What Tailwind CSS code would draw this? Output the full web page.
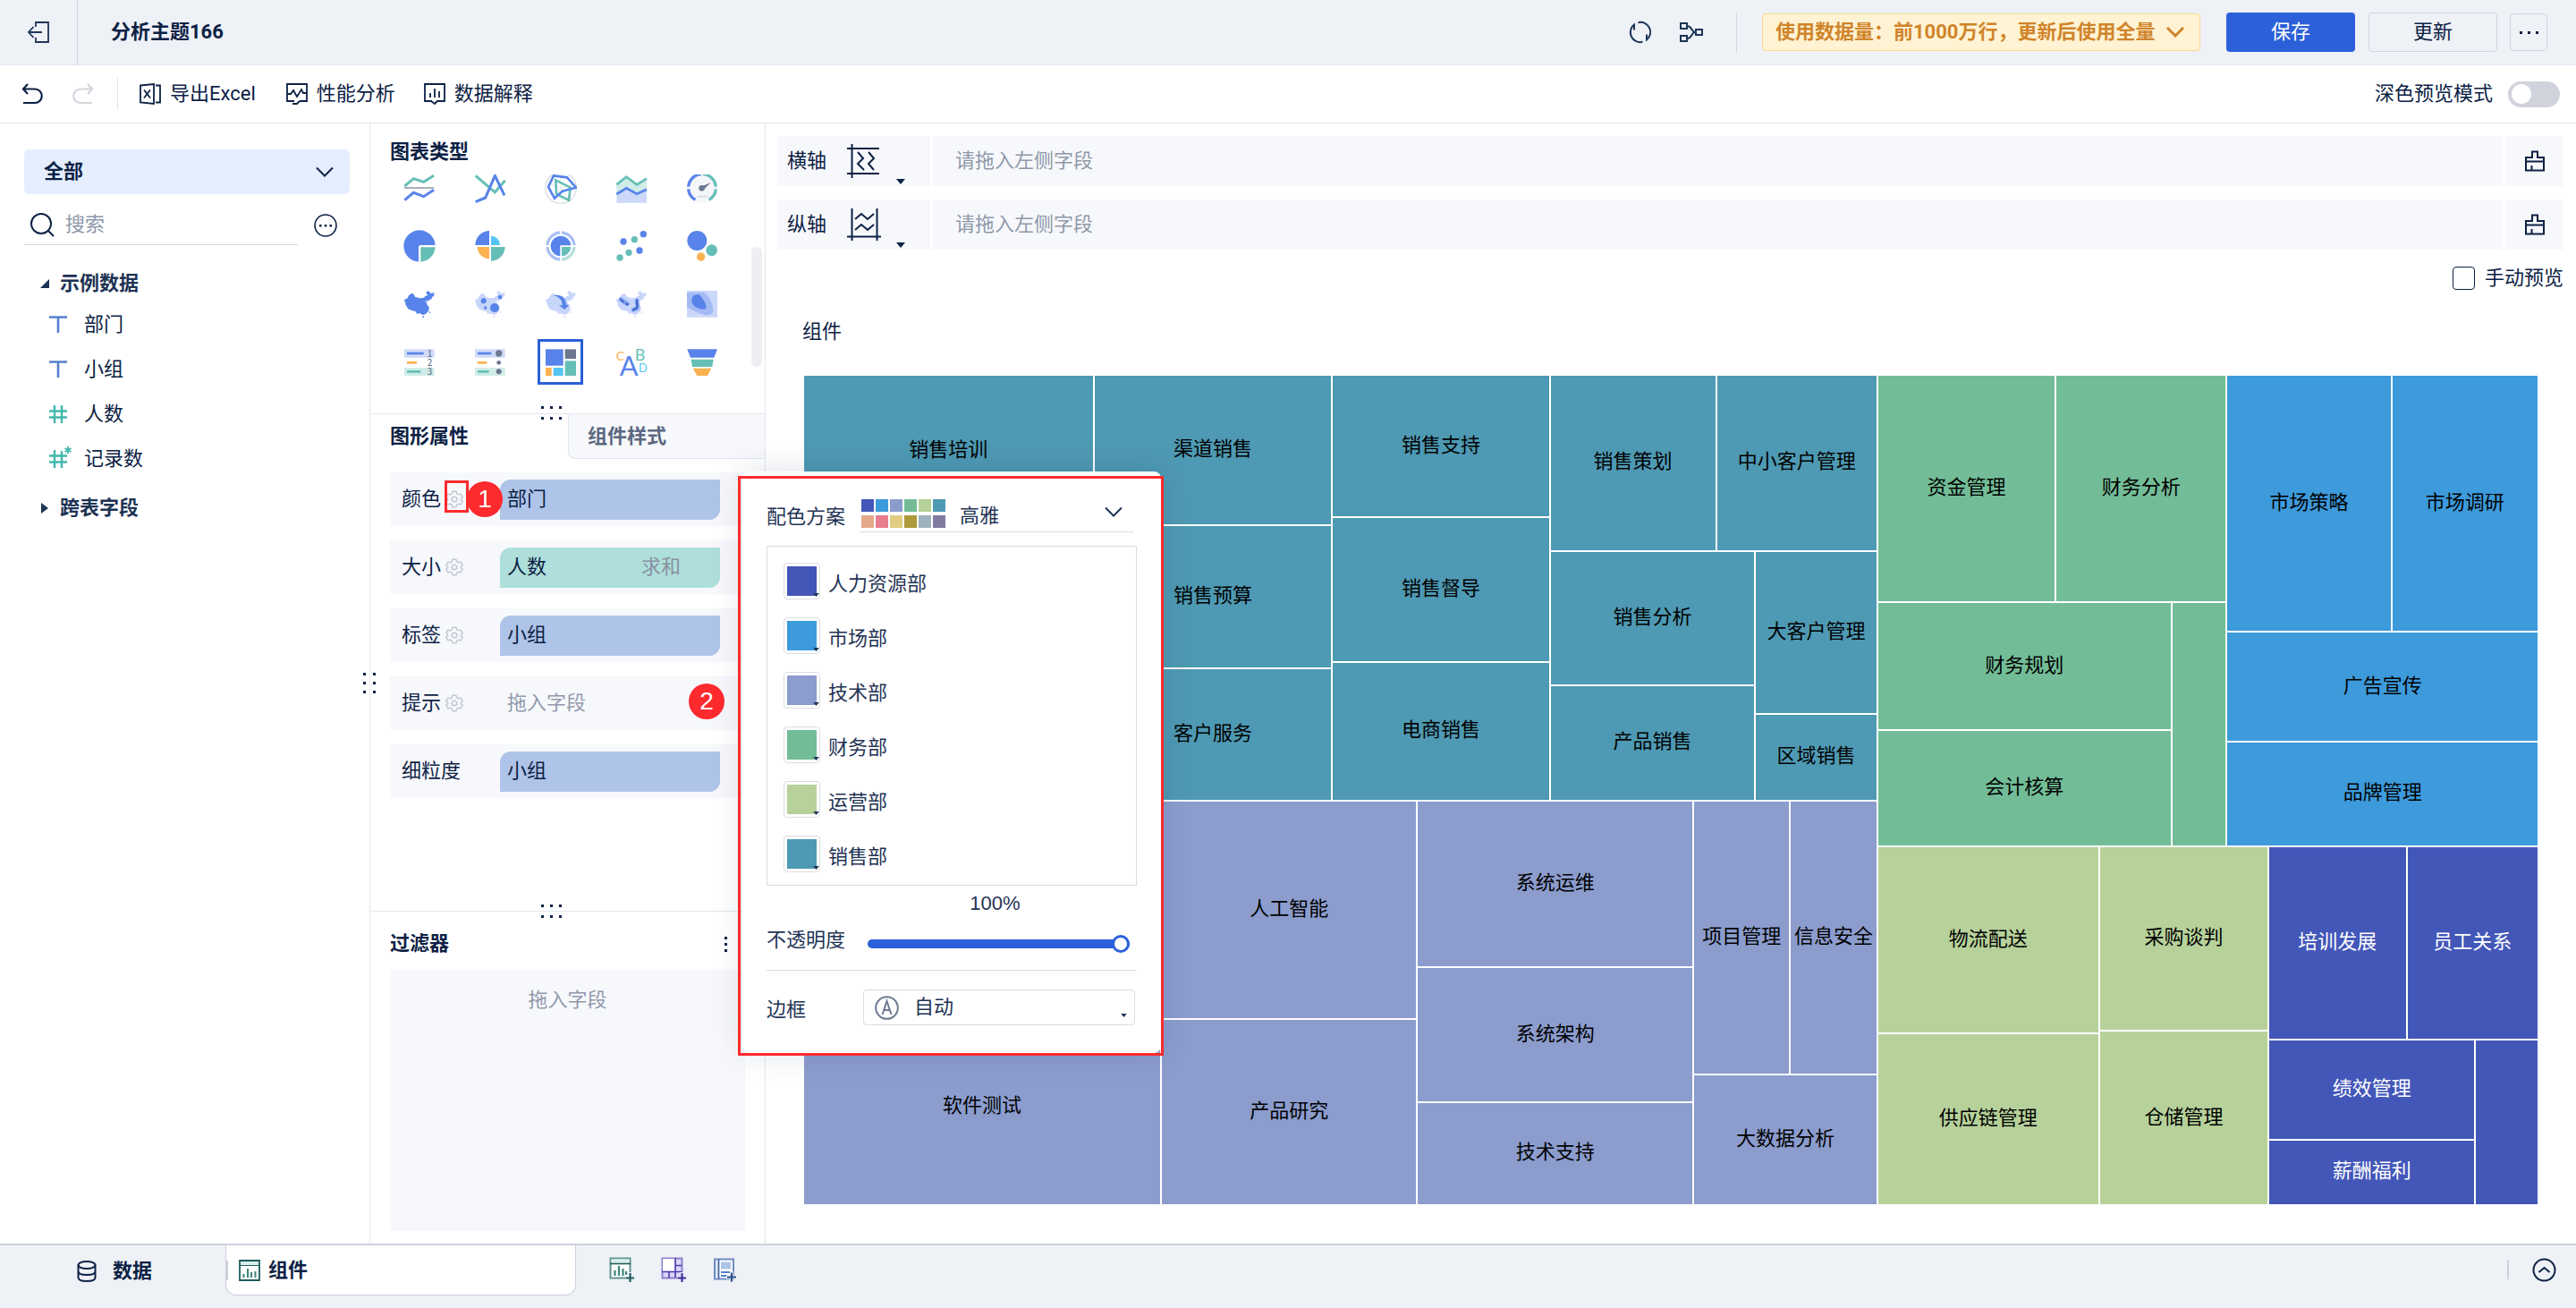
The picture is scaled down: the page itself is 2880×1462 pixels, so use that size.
<!DOCTYPE html>
<html lang="zh-CN">
<head>
<meta charset="utf-8">
<title>分析主题166</title>
<meta name="viewport" content="width=device-width, initial-scale=1">
<script src="https://cdn.jsdelivr.net/npm/@tailwindcss/browser@4"></script>
</head>
<body class="min-h-screen flex flex-col bg-white text-[22px] leading-7 text-[#0c2144] font-[Roboto,'Noto_Sans_CJK_SC',sans-serif]">

<svg class="hidden" aria-hidden="true">
  <symbol id="chevron" viewBox="0 0 20 12"><path d="M1 1.500l9 9 9-9" fill="none" stroke="currentColor" stroke-width="2"/></symbol>
  <symbol id="tri" viewBox="0 0 10 6"><path d="M0 0h10L5 6z" fill="currentColor"/></symbol>
  <symbol id="gear" viewBox="0 0 20 20"><g fill="none" stroke="#c3c8d3" stroke-width="1.500"><path d="M8 1.200h4l.8 2.600 1.800 1 2.600-.6 2 3.400-1.800 2v.8l1.800 2-2 3.400-2.600-.6-1.800 1-.8 2.600H8l-.8-2.600-1.800-1-2.600.6-2-3.400 1.800-2v-.8l-1.800-2 2-3.400 2.600.6 1.800-1z" stroke-linejoin="round"/><circle cx="10" cy="10" r="2.800"/></g></symbol>
  <symbol id="china" viewBox="0 0 108 108"><path d="M2 40l12-6 4-9 10-8 6 3 5 9 15 5 13-1 7-6 9-4-7-4 2-8 7-1 6 7 13-1-2 11-6 3-1 7-8 2-3 5-6-2-6 4 9 1-4 5 9 12-1 12-10 11-11 3-8-5-11 1-4-8-11-2-14-6-8-13-2-10zM64 94h6l-1 5h-4zM87 78h3v6h-3z" fill="currentColor"/></symbol>
  <symbol id="brush" viewBox="0 0 24 24"><path d="M9 8V1.500h6V8h7v14.500H2V8zM2 12.500h20M8.500 22v-5" fill="none" stroke="currentColor" stroke-width="2"/></symbol>
</svg>

<header class="flex items-center h-[73px] bg-[#eef1f6] border-b border-[#e2e5ee]">
  <button class="flex items-center justify-center w-[87px] h-full border-r border-[#d0d4de]" aria-label="退出">
    <svg class="size-6" viewBox="0 0 24 24" fill="none" stroke="#1d3557" stroke-width="1.800"><path d="M9 6V1h14v22H9v-5M16 12H1M6.500 6L1 12l5.500 6"/></svg>
  </button>
  <h1 class="ml-[37px] font-bold">分析主题166</h1>
  <div class="ml-auto flex items-center pr-8">
    <button aria-label="刷新"><svg class="size-[26px]" viewBox="0 0 26 26" fill="none" stroke="#1d3557" stroke-width="2"><path d="M10.500 2.200A11 11 0 0 1 20 21.500v-6M15.500 23.800A11 11 0 0 1 6 4.500v6"/></svg></button>
    <button class="ml-[31px]" aria-label="血缘"><svg class="size-[26px]" viewBox="0 0 26 26" fill="none" stroke="#1d3557" stroke-width="2"><path d="M1 3h7v6H1zM1 17h7v6H1zM18 10h7v6h-7zM8 6c6 0 5 7 9 7M8 20c6 0 5-7 9-7"/></svg></button>
    <span class="ml-[37px] w-px h-11 bg-[#d0d4de]"></span>
    <button class="ml-7 flex items-center justify-between w-[490px] h-[42px] pl-3.5 pr-[17px] rounded border border-[#fbd98c] bg-[#fff3d3] text-[#d0842a] font-bold whitespace-nowrap">使用数据量：前1000万行，更新后使用全量<svg class="w-5 h-3" viewBox="0 0 20 12"><path d="M1 1l9 9 9-9" fill="none" stroke="currentColor" stroke-width="3"/></svg></button>
    <button class="ml-[29px] w-36 h-11 rounded bg-[#2b60da] text-white">保存</button>
    <button class="ml-[15px] w-36 h-11 rounded border border-[#cfd3dd]">更新</button>
    <button class="ml-3.5 flex items-center justify-center gap-1.5 w-[42px] h-[42px] rounded border border-[#cfd3dd]" aria-label="更多"><i class="size-[3px] bg-[#0c2144]"></i><i class="size-[3px] bg-[#0c2144]"></i><i class="size-[3px] bg-[#0c2144]"></i></button>
  </div>
</header>

<nav class="flex items-center h-[65px] border-b border-[#e5e7ef] pl-6 pr-[18px]">
  <button aria-label="撤销"><svg class="size-6" viewBox="0 0 24 24" fill="none" stroke="currentColor" stroke-width="2.200"><path d="M7 1L2 6.500 7 12M2 6.500h13a7.500 7.500 0 0 1 0 15.500H2"/></svg></button>
  <button class="ml-[33px]" aria-label="重做" disabled><svg class="size-6" viewBox="0 0 24 24" fill="none" stroke="#d3d6dd" stroke-width="2.200"><path d="M17 1l5 5.500-5 5.500M22 6.500H9a7.500 7.500 0 0 0 0 15.500h13"/></svg></button>
  <span class="ml-[26px] w-px h-9 bg-[#e2e5ee]"></span>
  <button class="ml-6 flex items-center gap-2.5"><svg class="size-6" viewBox="0 0 24 24" fill="none" stroke="currentColor" stroke-width="1.800"><path d="M1 2.500L16 1v22L1 21.500zM18 2.500h5v19h-5M5 7.500l7 9M12 7.500l-7 9"/></svg>导出Excel</button>
  <button class="ml-[34px] flex items-center gap-2.5"><svg class="size-6" viewBox="0 0 24 24" fill="none" stroke="currentColor" stroke-width="1.800"><path d="M9 20H1V1h22v19h-8M7 23h5l3-3M1 12h4l3-4 4 7 5-8 2 4h4"/></svg>性能分析</button>
  <button class="ml-8 flex items-center gap-2.5"><svg class="size-6" viewBox="0 0 24 24" fill="none" stroke="currentColor" stroke-width="1.800"><path d="M9 20H1V1h22v19h-8l-3 3-4-3M7 11v5M12 6v10M17 9v7"/></svg>数据解释</button>
  <label class="ml-auto flex items-center gap-[17px]">深色预览模式
    <input type="checkbox" role="switch" class="appearance-none flex items-center w-[58px] h-[29px] pl-1 rounded-full bg-[#d0d3db] before:content-[''] before:size-[22px] before:rounded-full before:bg-white">
  </label>
</nav>

<main class="relative flex flex-1 min-h-0">

  <!-- field list -->
  <aside class="relative w-[414px] shrink-0 border-r border-[#e5e7ef] pl-[27px] pr-[22px] pt-[29px]">
    <button class="flex items-center justify-between w-full h-[50px] rounded-md bg-[#e4eeff] pl-[22px] pr-[18px] font-bold">全部<svg class="w-5 h-3"><use href="#chevron"/></svg></button>
    <div class="flex items-center justify-between mt-3 pr-3.5">
      <label class="flex items-center gap-3 w-[306px] h-[45px] pl-[7px] border-b border-[#d6d9e0]">
        <svg class="size-[27px] shrink-0" viewBox="0 0 27 27" fill="none" stroke="currentColor" stroke-width="2"><circle cx="12" cy="12" r="11"/><path d="M20 20l6 6"/></svg>
        <input type="text" aria-label="搜索" placeholder="搜索" class="w-full outline-none placeholder:text-[#8e98ab]">
      </label>
      <button aria-label="字段选项"><svg class="size-[26px]" viewBox="0 0 26 26"><circle cx="13" cy="13" r="12" fill="none" stroke="currentColor" stroke-width="1.600"/><path d="M6 12h2.500v2.500H6zM11.800 12h2.500v2.500h-2.500zM17.500 12H20v2.500h-2.500z" fill="currentColor"/></svg></button>
    </div>
    <div class="mt-[29px] pl-[18px] text-[#1d3354]">
      <button class="flex items-center gap-3 font-bold"><svg class="size-2.5" viewBox="0 0 10 10"><path d="M10 0v10H0z" fill="currentColor"/></svg>示例数据</button>
      <ul class="mt-[18px] pl-2.5 flex flex-col gap-[22px] text-[#0c2144]">
        <li class="flex items-center gap-[14px]"><svg class="w-[25px] h-5" viewBox="0 0 25 20"><path d="M0 1.500h20M10 1.500V19" stroke="#5580cf" stroke-width="2.600"/></svg>部门</li>
        <li class="flex items-center gap-[14px]"><svg class="w-[25px] h-5" viewBox="0 0 25 20"><path d="M0 1.500h20M10 1.500V19" stroke="#5580cf" stroke-width="2.600"/></svg>小组</li>
        <li class="flex items-center gap-[14px]"><svg class="w-[25px] h-5" viewBox="0 0 25 20"><path d="M0 6.500h20M0 13.500h20M6 0v20M14 0v20" stroke="#41b8ac" stroke-width="2.400"/></svg>人数</li>
        <li class="flex items-center gap-[14px]"><svg class="w-[25px] h-5 overflow-visible" viewBox="0 0 25 20"><path d="M0 6.500h20M0 13.500h20M6 0v20M14 1v19" stroke="#41b8ac" stroke-width="2.400"/><path d="M21-4v8M17.500-2l7 4M24.500-2l-7 4" stroke="#41b8ac" stroke-width="1.800"/></svg>记录数</li>
      </ul>
      <button class="mt-[27px] flex items-center gap-3 font-bold"><svg class="w-2.5 h-3" viewBox="0 0 10 12"><path d="M1 0l8 6-8 6z" fill="currentColor"/></svg>跨表字段</button>
    </div>
    <svg class="absolute -right-2 top-[614px] w-4 h-6" viewBox="0 0 16 24" fill="#0c2144"><path d="M1 0h3v3H1zM12 0h3v3h-3zM1 10h3v3H1zM12 10h3v3h-3zM1 20h3v3H1zM12 20h3v3h-3z"/></svg>
  </aside>

  <!-- chart type, attributes, filters -->
  <section class="flex flex-col w-[442px] shrink-0 border-r border-[#e5e7ef]">
    <div class="relative h-[325px] border-b border-[#e5e7ef]">
      <h2 class="pt-[18px] pl-[22px] font-bold">图表类型</h2>
      <div class="mt-[11px] h-[267px] overflow-hidden">
        <div class="-mt-[11px] ml-[29px] w-fit grid grid-cols-5 gap-x-7 gap-y-3.5 [&>button]:size-[51px] [&>button]:flex [&>button]:items-center [&>button]:justify-center [&_svg]:size-9">
          <button aria-label="分区折线图"><svg viewBox="0 0 108 108" fill="none" stroke-width="9"><path d="M4 48l30-25 34 11 34-21" stroke="#66bfb6"/><path d="M3 54h99" stroke="#8d95a6" stroke-width="4"/><path d="M4 95l30-25 34 13 34-22" stroke="#5883ea"/></svg></button>
          <button aria-label="折线图"><svg viewBox="0 0 108 108" fill="none" stroke-width="9"><path d="M5 13l65 56 34-40" stroke="#66bfb6"/><path d="M5 101l33-14 32-74 32 66" stroke="#5883ea"/></svg></button>
          <button aria-label="雷达图"><svg viewBox="0 0 108 108" fill="none"><circle cx="54" cy="54" r="52" stroke="#d9dde5" stroke-width="4"/><path d="M54 54V12M54 54l40-10M54 54L30 92M54 54L14 40M54 54l26 38" stroke="#e4e7ee" stroke-width="3"/><path d="M37 28l49 25-5 42-42-20z" stroke="#66bfb6" stroke-width="8"/><path d="M30 13l45 6 30 34-46 12-26 24-21-38z" stroke="#5883ea" stroke-width="8"/></svg></button>
          <button aria-label="面积图"><svg viewBox="0 0 108 108" fill="none"><path d="M4 43l33-26 35 26 33-20v34l-33 15-35-19L4 73z" fill="#d0ece8"/><path d="M4 75l33-20 35 19 33-16v46H4z" fill="#ccd8f8"/><g stroke-width="8"><path d="M4 43l33-26 35 26 33-20" stroke="#66bfb6"/><path d="M4 75l33-20 35 19 33-15" stroke="#5883ea"/></g></svg></button>
          <button aria-label="仪表盘"><svg viewBox="0 0 108 108" fill="none"><circle cx="54" cy="54" r="50" fill="#f5f6fa"/><g stroke-width="10"><path d="M51 8A46 46 0 0 0 8 50M8 58a46 46 0 0 0 23 36" stroke="#5883ea"/><path d="M57 8a46 46 0 0 1 43 42M100 58a46 46 0 0 1-23 36" stroke="#66bfb6"/></g><circle cx="53" cy="55" r="10" fill="#6b7790"/><path d="M50 50l33-14-24 24z" fill="#6b7790"/><path d="M37 83h34" stroke="#d9dde5" stroke-width="6"/></svg></button>

          <button aria-label="饼图"><svg viewBox="0 0 108 108"><circle cx="54" cy="54" r="53" fill="#5883ea"/><path d="M54 54h54v54H54z" fill="#fff"/><path d="M58 58h49a52 52 0 0 1-49 49z" fill="#66bfb6"/><path d="M54 54h54M54 54v54" stroke="#fff" stroke-width="6"/></svg></button>
          <button aria-label="玫瑰图"><svg viewBox="0 0 108 108"><path d="M51 51H4A48 48 0 0 1 51 3z" fill="#5883ea"/><path d="M57 51V20a31 31 0 0 1 30 31z" fill="#54c5f2"/><path d="M57 57h47a48 48 0 0 1-47 47z" fill="#66bfb6"/><path d="M51 57v40a41 41 0 0 1-40-40z" fill="#fbb14f"/></svg></button>
          <button aria-label="多层饼图"><svg viewBox="0 0 108 108" fill="none" stroke-width="10"><path d="M51 9A45 45 0 0 0 9 51M9 57a45 45 0 0 0 42 42M57 9a45 45 0 0 1 42 42" stroke="#abc0f4"/><path d="M99 57a45 45 0 0 1-42 42" stroke="#b3dfdb"/><path d="M52 88A34 34 0 1 1 88 52H52z" fill="#5883ea" stroke="none"/><path d="M57 57h31a33 33 0 0 1-31 31z" fill="#66bfb6" stroke="none"/></svg></button>
          <button aria-label="散点图"><svg viewBox="0 0 108 108"><g fill="#5883ea"><circle cx="94" cy="14" r="11"/><circle cx="27" cy="39" r="11"/><circle cx="81" cy="69" r="11"/></g><g fill="#66bfb6"><circle cx="64" cy="32" r="11"/><circle cx="45" cy="76" r="11"/><circle cx="15" cy="93" r="11"/></g></svg></button>
          <button aria-label="气泡图"><svg viewBox="0 0 108 108"><circle cx="37" cy="36" r="33" fill="#5883ea"/><circle cx="86" cy="68" r="19" fill="#66bfb6"/><circle cx="50" cy="90" r="14" fill="#fbb14f"/></svg></button>

          <button aria-label="区域地图"><svg viewBox="0 0 108 108" class="text-[#5883ea]"><use href="#china"/></svg></button>
          <button aria-label="点地图"><svg viewBox="0 0 108 108" class="text-[#c8d6fb]"><use href="#china"/><g fill="#5883ea"><circle cx="32" cy="43" r="9"/><circle cx="87" cy="30" r="7"/><circle cx="69" cy="66" r="15"/><circle cx="38" cy="66" r="5"/></g></svg></button>
          <button aria-label="流向地图"><svg viewBox="0 0 108 108" class="text-[#c8d6fb]"><use href="#china"/><path d="M30 24c26-4 42 8 42 32h11L67 72 47 58h12c1-16-9-27-29-34z" fill="#5883ea"/></svg></button>
          <button aria-label="热力地图"><svg viewBox="0 0 108 108" class="text-[#c8d6fb]"><use href="#china"/><path d="M18 38l22 15M72 42c0 12 6 18 1 26l-13 5" fill="none" stroke="#8ca9f1" stroke-width="15" stroke-linecap="round"/><path d="M18 38l9 9M36 52l5 3M73 40c-3 10 3 18-1 26l-12 7" fill="none" stroke="#3560c6" stroke-width="6" stroke-linecap="round"/></svg></button>
          <button aria-label="热力区域图"><svg viewBox="0 0 108 108"><path d="M3 9h102v89H3z" fill="#ccd8f9"/><path d="M3 14h56c14 4 34 38 32 64-4 16-26 14-42 8C30 78 10 70 3 62z" fill="#a3baf4"/><path d="M19 38c2-16 22-20 30-12 8 10 24 34 17 44-8 4-24 0-34-6-8-6-14-14-13-26z" fill="#5883ea"/></svg></button>

          <button aria-label="明细表"><svg viewBox="0 0 108 108" font-family="Noto Sans CJK SC, sans-serif" font-size="29" font-weight="500" fill="#6b7790"><path d="M3 10h101v28H3z" fill="#d1dbf8"/><path d="M3 72h101v27H3z" fill="#d0ece8"/><path d="M12 24h56" stroke="#5883ea" stroke-width="8"/><path d="M12 55h33" stroke="#fbb14f" stroke-width="8"/><path d="M12 85h46" stroke="#66bfb6" stroke-width="8"/><text x="80" y="35">1</text><text x="80" y="66">2</text><text x="80" y="97">3</text></svg></button>
          <button aria-label="KPI指标卡"><svg viewBox="0 0 108 108" fill="#6b7790"><path d="M3 10h101v28H3z" fill="#d1dbf8"/><path d="M3 72h101v27H3z" fill="#d0ece8"/><path d="M12 24h46" stroke="#5883ea" stroke-width="8"/><path d="M12 55h31" stroke="#fbb14f" stroke-width="8"/><path d="M12 85h38" stroke="#66bfb6" stroke-width="8"/><circle cx="83" cy="24" r="11"/><circle cx="83" cy="55" r="7"/><circle cx="83" cy="85" r="9"/></svg></button>
          <button aria-label="矩形树图" aria-pressed="true" class="border-3 border-[#2b5fd9]"><svg viewBox="0 0 108 108"><path d="M3 10h59v55H3z" fill="#5883ea"/><path d="M68 10h37v32H68z" fill="#6b7790"/><path d="M68 49h37v50H68z" fill="#66bfb6"/><path d="M3 72h20v27H3z" fill="#fbb14f"/><path d="M29 72h33v27H29z" fill="#54c5f2"/></svg></button>
          <button aria-label="词云"><svg viewBox="0 0 108 108" class="overflow-visible" font-family="Lato, sans-serif"><text x="2" y="48" font-size="42" fill="#fbb14f">C</text><text x="65" y="49" font-size="54" fill="#66bfb6">B</text><text x="14" y="99" font-size="92" fill="#5883ea">A</text><text x="78" y="88" font-size="38" fill="#54c5f2">D</text></svg></button>
          <button aria-label="漏斗图"><svg viewBox="0 0 108 108"><path d="M4 10h101L94 38H15z" fill="#5883ea"/><path d="M17 44h75l-4 25H21z" fill="#66bfb6"/><path d="M23 74h62L72 99H37z" fill="#fbb14f"/></svg></button>
        </div>
      </div>
      <span class="absolute right-[3px] top-[138px] w-3 h-[134px] rounded-full bg-[#eeeff3]"></span>
      <svg class="absolute left-[190px] -bottom-2 w-6 h-4" viewBox="0 0 24 16" fill="#0c2144"><path d="M1 0h3v3H1zM11 0h3v3h-3zM21 0h3v3h-3zM1 12h3v3H1zM11 12h3v3h-3zM21 12h3v3h-3z"/></svg>
    </div>

    <div class="flex-1">
      <div class="flex h-[50px] font-bold" role="tablist">
        <button role="tab" aria-selected="true" class="w-[221px] pl-[22px] text-left">图形属性</button>
        <button role="tab" aria-selected="false" class="flex-1 pl-[21px] text-left text-[#5b6880] bg-[#f7f8fc] border-l border-b border-[#e2e5ee] rounded-bl-lg">组件样式</button>
      </div>
      <div class="mt-[15px] ml-[22px] mr-[22px] flex flex-col gap-4">
        <div class="relative flex items-center h-[60px] pl-[13px] bg-[#f7f8fc]">
          <span class="w-[110px] flex items-center gap-[5px]">颜色<button aria-label="颜色设置"><svg class="size-5"><use href="#gear"/></svg></button></span>
          <span class="flex items-center w-[246px] h-[45px] pl-2 rounded-tl-xl rounded-br-xl bg-[#afc4e9]">部门</span>
          <span class="absolute left-[61px] top-[9px] w-[27px] h-9 border-3 border-[#fd2a2e]"></span>
          <span class="absolute left-[86px] top-2.5 flex items-center justify-center size-10 rounded-full bg-[#fd2a2e] text-white text-[28px] font-['Liberation_Sans',sans-serif]">1</span>
        </div>
        <div class="flex items-center h-[60px] pl-[13px] bg-[#f7f8fc]">
          <span class="w-[110px] flex items-center gap-[5px]">大小<button aria-label="大小设置"><svg class="size-5"><use href="#gear"/></svg></button></span>
          <span class="flex items-center justify-between w-[246px] h-[45px] pl-2 pr-11 rounded-tl-xl rounded-br-xl bg-[#aedfda]">人数<span class="text-[#8990a2]">求和</span></span>
        </div>
        <div class="flex items-center h-[60px] pl-[13px] bg-[#f7f8fc]">
          <span class="w-[110px] flex items-center gap-[5px]">标签<button aria-label="标签设置"><svg class="size-5"><use href="#gear"/></svg></button></span>
          <span class="flex items-center w-[246px] h-[45px] pl-2 rounded-tl-xl rounded-br-xl bg-[#afc4e9]">小组</span>
        </div>
        <div class="relative flex items-center h-[60px] pl-[13px] bg-[#f7f8fc]">
          <span class="w-[110px] flex items-center gap-[5px]">提示<button aria-label="提示设置"><svg class="size-5"><use href="#gear"/></svg></button></span>
          <span class="pl-2 text-[#9099ab]">拖入字段</span>
          <span class="absolute left-[334px] top-2 flex items-center justify-center size-10 rounded-full bg-[#fd2a2e] text-white text-[28px] font-['Liberation_Sans',sans-serif]">2</span>
        </div>
        <div class="flex items-center h-[60px] pl-[13px] bg-[#f7f8fc]">
          <span class="w-[110px]">细粒度</span>
          <span class="flex items-center w-[246px] h-[45px] pl-2 rounded-tl-xl rounded-br-xl bg-[#afc4e9]">小组</span>
        </div>
      </div>
    </div>

    <div class="relative border-t border-[#e5e7ef] px-[22px] pt-[22px] pb-3.5">
      <svg class="absolute left-[190px] -top-2 w-6 h-4" viewBox="0 0 24 16" fill="#0c2144"><path d="M1 0h3v3H1zM11 0h3v3h-3zM21 0h3v3h-3zM1 12h3v3H1zM11 12h3v3h-3zM21 12h3v3h-3z"/></svg>
      <div class="flex items-center justify-between pr-5">
        <h2 class="font-bold">过滤器</h2>
        <button aria-label="过滤器选项" class="flex flex-col gap-1"><i class="size-[3px] bg-[#0c2144]"></i><i class="size-[3px] bg-[#0c2144]"></i><i class="size-[3px] bg-[#0c2144]"></i></button>
      </div>
      <div class="mt-[15px] h-[292px] pt-5 bg-[#f7f8fc] text-center text-[#9099ab]">拖入字段</div>
    </div>
  </section>

  <!-- preview -->
  <section class="flex flex-col flex-1 min-w-0 pl-[13px] pr-3.5 pt-3.5">
    <div class="flex flex-col gap-[15px]">
      <div class="flex h-14 gap-[3px] [&>*]:bg-[#f7f8fc]">
        <button class="relative flex items-center w-[171px] pl-[11px]">横轴
          <svg class="ml-[23px] size-[38px]" viewBox="0 0 38 38" fill="none" stroke="currentColor" stroke-width="2"><path d="M5.500 0v38M0 5h36M0 33h36M12 9l6 7-6 6 7 7M24 9l6 7-6 6 6 7"/></svg>
          <svg class="absolute right-7 bottom-0.5 w-[10px] h-1.5"><use href="#tri"/></svg>
        </button>
        <div class="flex items-center flex-1 pl-[25px] text-[#8e98a9]">请拖入左侧字段</div>
        <button class="flex items-center justify-center w-[65px]" aria-label="清空横轴"><svg class="size-6"><use href="#brush"/></svg></button>
      </div>
      <div class="flex h-14 gap-[3px] [&>*]:bg-[#f7f8fc]">
        <button class="relative flex items-center w-[171px] pl-[11px]">纵轴
          <svg class="ml-[23px] size-[38px]" viewBox="0 0 38 38" fill="none" stroke="currentColor" stroke-width="2"><path d="M5.500 1v36M33.500 1v36M0 32.500h38M9 13l7-6 7 6 7-6M9 25l7-6 7 6 7-6"/></svg>
          <svg class="absolute right-7 bottom-0.5 w-[10px] h-1.5"><use href="#tri"/></svg>
        </button>
        <div class="flex items-center flex-1 pl-[25px] text-[#8e98a9]">请拖入左侧字段</div>
        <button class="flex items-center justify-center w-[65px]" aria-label="清空纵轴"><svg class="size-6"><use href="#brush"/></svg></button>
      </div>
    </div>
    <label class="mt-[18px] self-end flex items-center gap-[11px]"><input type="checkbox" class="appearance-none w-[25px] h-[26px] rounded border border-[#0c2144] bg-white">手动预览</label>
    <h2 class="mt-8 ml-7">组件</h2>

    <div class="mt-[35px] ml-[30px] mr-[29px] mb-11 flex-1 flex gap-0.5 text-black text-center [&_div]:min-w-0 [&_div]:min-h-0 [&_div]:basis-0 [&_div]:flex [&_div]:gap-0.5 [&_p]:flex [&_p]:items-center [&_p]:justify-center [&_p]:basis-0 [&_p]:min-w-0 [&_p]:min-h-0 [&_p]:pb-0.5 [&_p]:whitespace-nowrap">
      <div class="flex-col" style="flex-grow:1200">
        <div class="[&_p]:bg-[#4e99b3]" style="flex-grow:475">
          <div class="flex-col" style="flex-grow:325"><p style="flex-grow:170">销售培训</p><p style="flex-grow:158"></p><p style="flex-grow:147"></p></div>
          <div class="flex-col" style="flex-grow:267"><p style="flex-grow:168">渠道销售</p><p style="flex-grow:160">销售预算</p><p style="flex-grow:147">客户服务</p></div>
          <div class="flex-col" style="flex-grow:243"><p style="flex-grow:159">销售支持</p><p style="flex-grow:161">销售督导</p><p style="flex-grow:155">电商销售</p></div>
          <div class="flex-col" style="flex-grow:367">
            <div style="flex-grow:196"><p style="flex-grow:186">销售策划</p><p style="flex-grow:180">中小客户管理</p></div>
            <div style="flex-grow:279">
              <div class="flex-col" style="flex-grow:230"><p style="flex-grow:150">销售分析</p><p style="flex-grow:129">产品销售</p></div>
              <div class="flex-col" style="flex-grow:136"><p style="flex-grow:183">大客户管理</p><p style="flex-grow:96">区域销售</p></div>
            </div>
          </div>
        </div>
        <div class="[&_p]:bg-[#8b9ccd]" style="flex-grow:451">
          <div class="flex-col" style="flex-grow:401"><p style="flex-grow:231"></p><p style="flex-grow:220">软件测试</p></div>
          <div class="flex-col" style="flex-grow:286"><p style="flex-grow:244">人工智能</p><p style="flex-grow:207">产品研究</p></div>
          <div class="flex-col" style="flex-grow:309"><p style="flex-grow:187">系统运维</p><p style="flex-grow:150">系统架构</p><p style="flex-grow:114">技术支持</p></div>
          <div class="flex-col" style="flex-grow:205">
            <div style="flex-grow:307"><p style="flex-grow:108">项目管理</p><p style="flex-grow:97">信息安全</p></div>
            <p style="flex-grow:144">大数据分析</p>
          </div>
        </div>
      </div>
      <div class="flex-col" style="flex-grow:738">
        <div style="flex-grow:526">
          <div class="flex-col [&_p]:bg-[#72bd97]" style="flex-grow:390">
            <div style="flex-grow:254"><p style="flex-grow:199">资金管理</p><p style="flex-grow:191">财务分析</p></div>
            <div style="flex-grow:272">
              <div class="flex-col" style="flex-grow:330"><p style="flex-grow:143">财务规划</p><p style="flex-grow:129">会计核算</p></div>
              <p style="flex-grow:60"></p>
            </div>
          </div>
          <div class="flex-col [&_p]:bg-[#3d9adb]" style="flex-grow:348">
            <div style="flex-grow:291"><p style="flex-grow:184">市场策略</p><p style="flex-grow:164">市场调研</p></div>
            <p style="flex-grow:121">广告宣传</p>
            <p style="flex-grow:115">品牌管理</p>
          </div>
        </div>
        <div style="flex-grow:400">
          <div class="[&_p]:bg-[#b6d19a]" style="flex-grow:437">
            <div class="flex-col" style="flex-grow:248"><p style="flex-grow:209">物流配送</p><p style="flex-grow:191">供应链管理</p></div>
            <div class="flex-col" style="flex-grow:189"><p style="flex-grow:206">采购谈判</p><p style="flex-grow:194">仓储管理</p></div>
          </div>
          <div class="flex-col text-white [&_p]:bg-[#4357b9]" style="flex-grow:301">
            <div style="flex-grow:216"><p style="flex-grow:154">培训发展</p><p style="flex-grow:147">员工关系</p></div>
            <div style="flex-grow:184">
              <div class="flex-col" style="flex-grow:231"><p style="flex-grow:112">绩效管理</p><p style="flex-grow:72">薪酬福利</p></div>
              <p style="flex-grow:69"></p>
            </div>
          </div>
        </div>
      </div>
    </div>
  </section>

  <!-- colour settings popover -->
  <div role="dialog" aria-label="颜色设置" class="absolute left-[830px] top-[389px] w-[468px] px-[27px] pt-[27px] pb-[31px] rounded-lg bg-white shadow-[0_0_36px_rgba(20,40,80,0.14)] text-[#1f3354] font-['Noto_Sans_CJK_SC',sans-serif]">
    <span class="absolute -left-[5px] -right-[3px] top-[5px] -bottom-[3px] border-3 border-[#fd2a2e] pointer-events-none"></span>
    <div class="flex items-center h-[41px]">
      <label for="scheme" class="w-[104px]">配色方案</label>
      <div class="relative flex items-center flex-1 h-full mr-1 pl-0.5 border-b border-[#dadde6]">
        <span class="grid grid-cols-6 gap-x-0.5 gap-y-1 [&>i]:size-3.5">
          <i class="bg-[#4357b9]"></i><i class="bg-[#3d9adb]"></i><i class="bg-[#8b9ccd]"></i><i class="bg-[#72bd97]"></i><i class="bg-[#b6d19a]"></i><i class="bg-[#4e99b3]"></i>
          <i class="bg-[#e5a888]"></i><i class="bg-[#e77d8d]"></i><i class="bg-[#e0cd82]"></i><i class="bg-[#ac9a3b]"></i><i class="bg-[#9fb1bd]"></i><i class="bg-[#817a9f]"></i>
        </span>
        <select id="scheme" class="appearance-none flex-1 ml-4 h-9 bg-transparent"><option>高雅</option></select>
        <svg class="absolute right-3 top-3 w-5 h-3 pointer-events-none"><use href="#chevron"/></svg>
      </div>
    </div>
    <ul class="mt-[15px] border border-[#dadde6] pt-[18px] pb-3.5 pl-[18px] flex flex-col gap-5 [&>li]:flex [&>li]:items-center [&>li]:gap-[9px] [&_button]:relative [&_button]:size-[41px] [&_button]:p-[3px] [&_button]:rounded [&_button]:border [&_button]:border-[#dadde6] [&_i]:block [&_i]:size-[33px] [&_svg]:absolute [&_svg]:right-0 [&_svg]:bottom-0.5 [&_svg]:w-[7px] [&_svg]:h-1">
      <li><button aria-label="人力资源部颜色"><i class="bg-[#4357b9]"></i><svg><use href="#tri"/></svg></button>人力资源部</li>
      <li><button aria-label="市场部颜色"><i class="bg-[#3d9adb]"></i><svg><use href="#tri"/></svg></button>市场部</li>
      <li><button aria-label="技术部颜色"><i class="bg-[#8b9ccd]"></i><svg><use href="#tri"/></svg></button>技术部</li>
      <li><button aria-label="财务部颜色"><i class="bg-[#72bd97]"></i><svg><use href="#tri"/></svg></button>财务部</li>
      <li><button aria-label="运营部颜色"><i class="bg-[#b6d19a]"></i><svg><use href="#tri"/></svg></button>运营部</li>
      <li><button aria-label="销售部颜色"><i class="bg-[#4e99b3]"></i><svg><use href="#tri"/></svg></button>销售部</li>
    </ul>
    <div class="mt-1.5 flex items-end pr-2">
      <label for="opacity" class="w-[113px] mb-[3px]">不透明度</label>
      <div class="flex-1 flex flex-col">
        <output for="opacity" class="text-center pr-2 font-['Liberation_Sans',sans-serif]">100%</output>
        <input id="opacity" type="range" min="0" max="100" value="100" class="appearance-none mt-[26px] mb-[5px] w-full h-2.5 rounded-full bg-[#2b60da] [&::-webkit-slider-thumb]:appearance-none [&::-webkit-slider-thumb]:size-5 [&::-webkit-slider-thumb]:rounded-full [&::-webkit-slider-thumb]:border-3 [&::-webkit-slider-thumb]:border-solid [&::-webkit-slider-thumb]:border-[#2b60da] [&::-webkit-slider-thumb]:bg-white">
      </div>
    </div>
    <hr class="mt-[19px] border-[#dadde6]">
    <div class="mt-[21px] flex items-center">
      <label for="border" class="w-[108px]">边框</label>
      <div class="relative flex items-center flex-1 h-10 mr-0.5 pl-3 rounded border border-[#dadde6]">
        <svg class="size-[27px] shrink-0" viewBox="0 0 27 27" fill="none" stroke="#6d7a92" stroke-width="2"><circle cx="13.500" cy="13.500" r="12.300"/><path d="M8.500 21l5-15 5 15M10 16h7"/></svg>
        <select id="border" class="appearance-none flex-1 ml-[17px] h-full bg-transparent font-[Roboto,'Noto_Sans_CJK_SC',sans-serif]"><option>自动</option></select>
        <svg class="absolute right-2 bottom-2 w-[7px] h-1 pointer-events-none"><use href="#tri"/></svg>
      </div>
    </div>
  </div>
</main>

<footer class="flex h-[72px] bg-[#eef1f6] border-t-2 border-[#cdd1de] font-bold">
  <button class="flex items-center gap-[18px] h-[58px] w-[252px] pl-[86px]"><svg class="w-[22px] h-6" viewBox="0 0 22 24" fill="none" stroke="currentColor" stroke-width="2"><ellipse cx="11" cy="5" rx="9.500" ry="4"/><path d="M1.500 5v14c0 5.300 19 5.300 19 0V5M1.500 12c0 5.300 19 5.300 19 0"/></svg>数据</button>
  <button class="flex items-center h-14 w-[392px] bg-white border border-t-0 border-[#cdd1de] rounded-b-xl text-left">
    <span class="w-0.5 h-[22px] bg-[#cdd1de]"></span>
    <svg class="ml-3 mr-[9px] size-6" viewBox="0 0 24 24"><path d="M1 1h22v22H1z" fill="#fff" stroke="#1f5b5a" stroke-width="1.800"/><path d="M2 2h20v4H2z" fill="#d7eeec"/><path d="M1 6.500h22" stroke="#1f5b5a"/><path d="M5.500 16v4M10 10v10M14 14v6M18.500 13v7" stroke="#3b857c" stroke-width="2"/></svg>
    组件
  </button>
  <div class="flex items-center gap-[30px] h-[54px] ml-[37px] [&_svg]:size-7">
    <button aria-label="添加组件"><svg viewBox="0 0 28 28"><path d="M1.500 1.500h22v22h-22z" fill="#fff" stroke="#5f9490" stroke-width="2"/><path d="M2.500 2.500h20v4h-20z" fill="#d7eeec"/><path d="M1 7.500h23" stroke="#1f5b5a" stroke-width="1.600"/><path d="M6.500 15v6M11 10v11M15.500 13v8M19 16v4" stroke="#3b857c" stroke-width="2.200"/><path d="M23.500 17v11M18 23.500h10" stroke="#eef1f6" stroke-width="4"/><path d="M23.500 18v10M18.500 23.500H28" stroke="#1f5b5a" stroke-width="2.200"/></svg></button>
    <button aria-label="添加仪表板"><svg viewBox="0 0 28 28"><path d="M1.500 1.500h22v22h-22z" fill="#dcd6f7" stroke="#8b80cf" stroke-width="2"/><path d="M2 2h14v14H2z" fill="#fff"/><path d="M16 1v15.500M1 16.500h22M16 9.500h7M9 16.500V23M16 16.500V23" stroke="#4a3aa8" stroke-width="1.600" fill="none"/><path d="M23.500 17v11M18 23.500h10" stroke="#eef1f6" stroke-width="4"/><path d="M23.500 18v10M18.500 23.500H28" stroke="#3d2ea0" stroke-width="2.200"/></svg></button>
    <button aria-label="添加分析文档"><svg viewBox="0 0 28 28"><path d="M2 2.500h21v22H2z" fill="#fff" stroke="#6f8cc0" stroke-width="2"/><path d="M3 3.500h3v20H3z" fill="#dbe6f7"/><path d="M6.500 2.500v22" stroke="#3a5b96" stroke-width="1.600"/><path d="M9 5.500h11v8H9z" fill="#aec3e8"/><path d="M9 17h11M9 21h7" stroke="#5580cf" stroke-width="1.800"/><path d="M21 16v12M15 22.500h12" stroke="#eef1f6" stroke-width="4"/><path d="M21 17.500v10M16 22.500h10" stroke="#2f4f8c" stroke-width="2.200"/></svg></button>
  </div>
  <div class="ml-auto flex items-center gap-[26px] h-[54px] pr-[22px]">
    <span class="w-0.5 h-[22px] bg-[#cdd1de]"></span>
    <button aria-label="展开"><svg class="size-[27px]" viewBox="0 0 27 27" fill="none" stroke="currentColor" stroke-width="2"><circle cx="13.500" cy="13.500" r="12"/><path d="M7.500 16l6-5 6 5"/></svg></button>
  </div>
</footer>
</body>
</html>
